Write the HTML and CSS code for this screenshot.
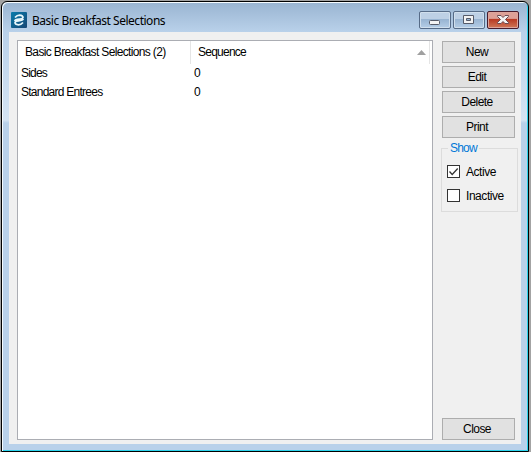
FILE: index.html
```html
<!DOCTYPE html>
<html lang="en">
<head>
<meta charset="utf-8">
<title>Basic Breakfast Selections</title>
<link rel="stylesheet" href="styles.css">
</head>
<body>
<div class="window">
  <header class="titlebar">
    <svg class="app-icon" width="16" height="16" viewBox="0 0 16 16">
      <defs><linearGradient id="tile" x2="1" y2="1"><stop stop-color="#087cac"/><stop offset="1" stop-color="#174674"/></linearGradient></defs>
      <rect width="16" height="16" rx="1" fill="url(#tile)"/>
      <path d="M4 5.500Q6 3.200 8.500 3.200Q12 3.500 12 5.500Q11.500 7 8.500 7.200Q4 7.500 3.800 9M12 10.500Q10 12.800 7.500 12.800Q4 12.500 4 10.500Q4.500 9 7.500 8.800Q12 8.500 12.200 7" fill="none" stroke="#e8f7fb" stroke-width="1.700"/>
    </svg>
    <h1 class="title">Basic Breakfast Selections</h1>
    <div class="controls">
      <svg class="control" width="32" height="18" viewBox="0 0 30 16"><rect x="9.500" y="8.500" width="10" height="4" rx="1" fill="#f3f3f3" stroke="#565b69"/></svg>
      <svg class="control" width="32" height="18" viewBox="0 0 30 16"><path d="M9.500 3.500h10v8h-10zM12.500 6.500v2h4v-2z" fill="#f3f3f3" fill-rule="evenodd" stroke="#565b69"/></svg>
      <svg class="control control-close" width="32" height="18" viewBox="0 0 30 16"><path d="M9.500 3.500h3.500l2 2 2-2h3.500v1l-3 3 3 3v1h-3.500l-2-2-2 2h-3.500v-1l3-3-3-3z" fill="#f3f3f3" stroke="#6b4a51"/></svg>
    </div>
  </header>
  <main class="client">
    <section class="list">
      <div class="list-head">
        <div class="column name-column"><span class="heading-name">Basic Breakfast Selections (2)</span></div>
        <div class="column sequence-column"><span class="sequence">Sequence</span><svg class="sort" width="9" height="5"><path d="M4.500 0 9 5H0z" fill="#a0a0a0"/></svg></div>
      </div>
      <div class="row"><span class="name sides">Sides</span><span>0</span></div>
      <div class="row"><span class="name">Standard Entrees</span><span>0</span></div>
    </section>
    <aside class="side">
      <button class="button">New</button>
      <button class="button">Edit</button>
      <button class="button">Delete</button>
      <button class="button">Print</button>
      <fieldset class="show">
        <legend>Show</legend>
        <label class="option"><svg class="check" width="13" height="13"><rect x=".5" y=".5" width="12" height="12" fill="#fff" stroke="#333"/><path d="m2.500 6.500 2.700 3L10.700 3.500" fill="none" stroke="#333" stroke-width="1.300"/></svg><span>Active</span></label>
        <label class="option"><svg class="check" width="13" height="13"><rect x=".5" y=".5" width="12" height="12" fill="#fff" stroke="#333"/></svg><span>Inactive</span></label>
      </fieldset>
      <button class="button close">Close</button>
    </aside>
  </main>
</div>
</body>
</html>
```
FILE: styles.css
```css
* { box-sizing: border-box; }
body {
  margin: 0;
  height: 452px;
  padding: 1px 2px 0 1px;
  overflow: hidden;
  background: #a3a3a3;
  color: #000;
  font: 12px/15px "Liberation Sans", Arial, sans-serif;
}
.window {
  height: 451px;
  display: flex;
  flex-direction: column;
  border: 1px solid #000;
  border-radius: 6px 6px 0 0;
  box-shadow: inset 1px 1px #f5fbff, inset -1px -1px #2bd3ec;
  background: linear-gradient(#99b4d1 0, #b9d1ea 30px, #d5e4f3 118px, #b9d1ea 121px);
  padding: 1px 7px 7px 7px;
}
.titlebar {
  height: 29px;
  display: flex;
  padding-left: 2px;
}
.app-icon { margin-top: 9px; }
.title {
  margin: 10px 0 0 5px;
  font: 12px/16px "Noto Sans", sans-serif;
  letter-spacing: -.48px;
  white-space: nowrap;
}
.controls {
  display: flex;
  gap: 2px;
  margin: 8px 2px 0 auto;
}
.control {
  border: 1px solid #566b87;
  border-radius: 2px;
  background: linear-gradient(#bdd0e5 0 45%, #98b4d2 46%, #b5cee7);
  box-shadow: inset 0 0 0 1px #d0dfed;
}
.control-close {
  border-color: #481c2c;
  background: linear-gradient(#dda096 0 40%, #b83a23 46%, #d07858);
  box-shadow: inset 0 0 0 1px #dda59c;
}
.client {
  flex: 1;
  display: flex;
  gap: 8px;
  padding: 8px 2px 4px 8px;
  background: #f0f0f0;
}
.list {
  flex: none;
  width: 416px;
  border: 1px solid #abadb3;
  background: #fff;
}
.list-head { display: flex; height: 23px; }
.column { border-right: 1px solid #e5e5e5; padding: 4px 0 0 7px; white-space: nowrap; }
.name-column { width: 173px; }
.sequence-column { width: 239px; display: flex; justify-content: space-between; }
.sort { margin: 5px 3px 0 0; }
.heading-name { letter-spacing: -.65px; }
.sequence { letter-spacing: -.75px; }
.row { display: flex; height: 19px; padding: 2px 0 0 3px; letter-spacing: -.75px; }
.name { width: 173px; }
.sides { letter-spacing: -.8px; }
.side { width: 77px; display: flex; flex-direction: column; padding: 1px 0 0 1px; }
.button {
  width: 73px;
  height: 22px;
  flex: none;
  margin: 0 0 3px;
  padding: 0 3px 0 0;
  border: 1px solid #adadad;
  background: #e1e1e1;
  color: #000;
  font: inherit;
  letter-spacing: -.55px;
}
.show {
  width: 77px;
  height: 71px;
  margin: 0 0 0 -1px;
  padding: 0 0 0 5px;
  border: 1px solid #dcdcdc;
  color: #000;
}
.show legend { padding: 0 2px; margin-left: 1px; color: #0078d7; letter-spacing: -.8px; }
.option { display: flex; gap: 6px; height: 24px; padding-top: 9px; letter-spacing: -.45px; line-height: 14px; }
.check { flex: none; }
.close { margin: auto 0 0; }
```
